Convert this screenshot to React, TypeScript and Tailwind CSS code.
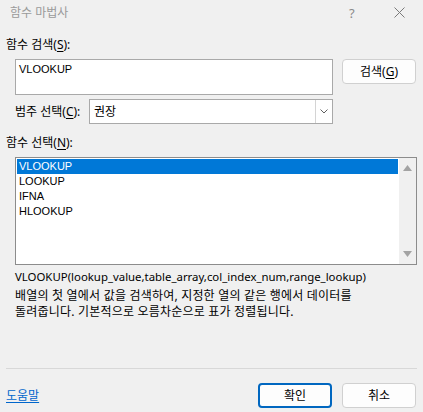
import React from "react";

const ui = "font-['Noto_Sans','Noto_Sans_CJK_KR',sans-serif]";
const classic = "font-['Liberation_Sans','Noto_Sans_CJK_KR',sans-serif]";

const items = ["VLOOKUP", "LOOKUP", "IFNA", "HLOOKUP"];

function Key({ k }: { k: string }) {
  return <span className="underline underline-offset-2">{k}</span>;
}

function Button({ children, primary }: { children: React.ReactNode; primary?: boolean }) {
  return (
    <button
      className={
        "w-[74px] h-[25px] rounded-[4px] bg-[#fdfdfd] text-[12px] text-black flex items-center justify-center " +
        (primary ? "border-2 border-[#0067c0]" : "border border-[#d0d0d0]")
      }
    >
      {children}
    </button>
  );
}

export default function App() {
  return (
    <div className={`w-[423px] h-[412px] bg-[#f0f0f0] flex flex-col text-[12px] leading-[16px] text-black ${ui}`}>
      {/* title bar */}
      <div className="h-[25px] flex items-center pl-[10px]">
        <span className="text-[#9a9a9a]">함수 마법사</span>
        <span className="ml-auto text-[#8a8a8a] text-[13px] w-[10px]">?</span>
        <svg className="ml-[35px] mr-[18px]" width="11" height="11" viewBox="0 0 11 11">
          <path d="M0.5 0.5 L10.5 10.5 M10.5 0.5 L0.5 10.5" stroke="#7a7a7a" strokeWidth="1" />
        </svg>
      </div>

      <div className="mt-[12px] pl-[6px]">
        함수 검색(<Key k="S" />):
      </div>

      <div className="mt-[6px] flex items-start pl-[15px]">
        <div className={`w-[318px] h-[36px] bg-white border border-[#a9a9a9] pl-[3px] pt-[2px] text-[11px] leading-[15px] ${classic}`}>
          VLOOKUP
        </div>
        <div className="ml-[9px]">
          <Button>
            검색(<Key k="G" />)
          </Button>
        </div>
      </div>

      <div className="mt-[4px] flex items-center pl-[15px]">
        <span className="w-[74px]">
          범주 선택(<Key k="C" />):
        </span>
        <div className="w-[244px] h-[25px] bg-white border border-[#a9a9a9] flex items-center">
          <span className="pl-[4px] flex-1">권장</span>
          <div className="w-[17px] h-full border-l border-[#d4d4d4] flex items-center justify-center">
            <svg width="8" height="5" viewBox="0 0 8 5">
              <path d="M0.5 0.5 L4 4 L7.5 0.5" stroke="#606060" fill="none" strokeWidth="1" />
            </svg>
          </div>
        </div>
      </div>

      <div className="mt-[11px] pl-[6px]">
        함수 선택(<Key k="N" />):
      </div>

      <div className="mt-[6px] ml-[15px] w-[402px] h-[108px] bg-white border border-[#8c8c8c] flex">
        <div className={`flex-1 p-[1px] text-[11px] ${classic}`}>
          {items.map((it, i) => (
            <div
              key={it}
              className={
                "h-[15px] leading-[15px] pl-[2px] " + (i === 0 ? "bg-[#0078d7] text-white" : "text-black")
              }
            >
              {it}
            </div>
          ))}
        </div>
        <div className="w-[17px] bg-[#f0f0f0] flex flex-col items-center justify-between py-[7px]">
          <svg width="9" height="6" viewBox="0 0 9 6">
            <path d="M0 6 L4.5 0 L9 6 Z" fill="#a3a3a3" />
          </svg>
          <svg width="9" height="6" viewBox="0 0 9 6">
            <path d="M0 0 L4.5 6 L9 0 Z" fill="#a3a3a3" />
          </svg>
        </div>
      </div>

      <div className="mt-[4px] pl-[15px] leading-[15px] text-[11.4px]">
        VLOOKUP(lookup_value,table_array,col_index_num,range_lookup)
      </div>
      <div className="mt-[4px] pl-[15px] leading-[16px] tracking-[0.2px]">
        <div>배열의 첫 열에서 값을 검색하여, 지정한 열의 같은 행에서 데이터를</div>
        <div>돌려줍니다. 기본적으로 오름차순으로 표가 정렬됩니다.</div>
      </div>

      <div className="mt-auto mx-[6px] h-px bg-[#d8d8d8]" />

      <div className="mt-[14px] mb-[4px] flex items-center pl-[6px] pr-[7px]">
        <span className="text-[#0066cc] underline underline-offset-2">도움말</span>
        <div className="ml-auto flex gap-[10px]">
          <Button primary>확인</Button>
          <Button>취소</Button>
        </div>
      </div>
    </div>
  );
}
